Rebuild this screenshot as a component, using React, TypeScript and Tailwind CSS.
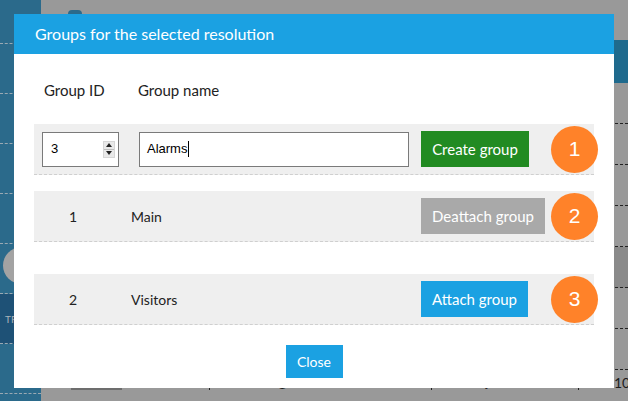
import { useState } from 'react';

const segoe = { fontFamily: 'Lato, "Open Sans", sans-serif' };

function Badge({ n }: { n: number }) {
  return (
    <div
      className="flex h-[47px] w-[47px] shrink-0 items-center justify-center rounded-full bg-[#ff8229] text-[21px] text-white"
      style={{ fontFamily: '"Liberation Sans", Arial, sans-serif' }}
    >
      {n}
    </div>
  );
}

function Spinner() {
  return (
    <div className="flex h-[17px] w-[15px] flex-col border border-[#d6d6d6] bg-[#e9e9e9]">
      <div className="flex flex-1 items-center justify-center border-b border-[#bdbdbd]">
        <div className="h-0 w-0 border-x-[3px] border-b-[4px] border-x-transparent border-b-[#222]" />
      </div>
      <div className="flex flex-1 items-center justify-center">
        <div className="h-0 w-0 border-x-[3px] border-t-[4px] border-x-transparent border-t-[#222]" />
      </div>
    </div>
  );
}

function Backdrop() {
  const leftItems = [0, 1, 2, 3, 4, 5, 6];
  const rows = [0, 1, 2, 3, 4, 5, 6];
  return (
    <div className="flex h-full w-full">
      <div className="flex w-[41px] shrink-0 flex-col bg-[#2b6a8b]">
        <div className="h-[44px] border-b border-dashed border-[#9aa9b3]" />
        {leftItems.map((i) => (
          <div
            key={i}
            className={`relative h-[50px] border-b border-dashed border-[#9aa9b3] ${i === 5 ? 'bg-[#1e5176]' : ''}`}
          >
            {i === 4 && (
              <div className="absolute left-[3px] top-[3px] h-[37px] w-[37px] rounded-full bg-[#a3a3a3]" />
            )}
            {i === 5 && (
              <span className="absolute left-[5px] top-[18px] text-[10px] text-[#a9b3ba]" style={segoe}>
                TR
              </span>
            )}
          </div>
        ))}
      </div>
      <div className="flex flex-1 flex-col bg-[#999999]">
        <div className="h-[40px]">
          <div className="ml-[27px] mt-[10px] h-[4px] w-[14px] rounded-t-full bg-[#2b6a8b]" />
        </div>
        <div className="h-[43px] bg-[#1f6a8d]" />
        {rows.map((i) => (
          <div
            key={i}
            className={`h-[41px] border-b border-dashed border-[#222] ${i === 4 ? 'bg-[#8a8a8a]' : ''}`}
          />
        ))}
        <div className="relative flex h-[30px] text-[13px] text-[#1c1c1c]" style={segoe}>
          <span className="ml-[30px] mt-[3px]">Kuails-iPhone-3</span>
          <span className="absolute left-[168px] top-[10px] h-[10px] border-l border-dashed border-[#222]" />
          <span className="absolute left-[179px] top-[3px]">team.user@infarmmobile.ru</span>
          <span className="absolute left-[390px] top-[10px] h-[10px] border-l border-dashed border-[#222]" />
          <span className="absolute left-[400px] top-[3px]">Our Project</span>
          <span className="absolute left-[537px] top-[10px] h-[10px] border-l border-dashed border-[#222]" />
          <span className="absolute left-[573px] top-[2px] text-[14px]">10/</span>
          <span className="absolute left-[30px] top-[12px] h-[8px] w-[51px] bg-[#6d6d6d]" />
        </div>
      </div>
    </div>
  );
}

export default function App() {
  const [groupId, setGroupId] = useState('3');
  const [groupName, setGroupName] = useState('Alarms');

  return (
    <div className="relative h-[401px] w-[628px] overflow-hidden">
      <Backdrop />

      <div className="absolute left-[14px] top-[14px] flex h-[374px] w-[600px] flex-col bg-white" style={segoe}>
        <div className="flex h-[40px] shrink-0 items-center bg-[#1ba1e2] px-[21px] text-[16px] text-white">
          Groups for the selected resolution
        </div>

        <div className="flex flex-col px-[20px]">
          <div className="mt-[26px] flex h-[20px] items-center text-[15px] text-[#222]">
            <span className="ml-[10px] w-[94px]">Group ID</span>
            <span>Group name</span>
          </div>

          <div className="mt-[24px] flex h-[51px] w-[560px] items-center border-b border-dashed border-[#cfcfcf] bg-[#efefef]">
            <div className="w-[97px] shrink-0 pl-[8px]">
              <div className="flex h-[35px] w-[77px] items-center border border-[#7a7a7a] bg-white pl-[8px] pr-[3px]">
                <input
                  value={groupId}
                  onChange={(e) => setGroupId(e.target.value)}
                  className="w-full min-w-0 bg-transparent text-[13px] text-black outline-none"
                  style={{ fontFamily: '"Liberation Sans", Arial, sans-serif' }}
                />
                <Spinner />
              </div>
            </div>
            <div className="w-[290px] shrink-0 pl-[8px]">
              <div className="flex h-[35px] w-[270px] items-center border border-[#7a7a7a] bg-white px-[7px]">
                <span
                  className="text-[13px] text-black"
                  style={{ fontFamily: '"Liberation Sans", Arial, sans-serif' }}
                >
                  {groupName}
                </span>
                <span className="ml-[1px] h-[16px] w-px bg-black" />
                <input
                  value=""
                  onChange={(e) => setGroupName(groupName + e.target.value)}
                  className="sr-only"
                />
              </div>
            </div>
            <div className="w-[130px] shrink-0">
              <button
                type="button"
                className="h-[36px] w-[108px] bg-[#228b22] text-[15px] text-white"
              >
                Create group
              </button>
            </div>
            <Badge n={1} />
          </div>

          <div className="mt-[16px] flex h-[51px] w-[560px] items-center border-b border-dashed border-[#cfcfcf] bg-[#efefef] text-[14px] text-[#222]">
            <div className="w-[97px] shrink-0 pl-[35px]">1</div>
            <div className="w-[290px] shrink-0">Main</div>
            <div className="w-[130px] shrink-0">
              <button
                type="button"
                className="h-[36px] w-[124px] bg-[#a9a9a9] text-[15px] text-white"
              >
                Deattach group
              </button>
            </div>
            <Badge n={2} />
          </div>

          <div className="mt-[32px] flex h-[51px] w-[560px] items-center border-b border-dashed border-[#cfcfcf] bg-[#efefef] text-[14px] text-[#222]">
            <div className="w-[97px] shrink-0 pl-[35px]">2</div>
            <div className="w-[290px] shrink-0">Visitors</div>
            <div className="w-[130px] shrink-0">
              <button
                type="button"
                className="h-[36px] w-[107px] bg-[#1ba1e2] text-[15px] text-white"
              >
                Attach group
              </button>
            </div>
            <Badge n={3} />
          </div>

          <div className="mt-[20px] flex justify-center">
            <button type="button" className="h-[33px] w-[57px] bg-[#1ba1e2] text-[14px] text-white">
              Close
            </button>
          </div>
        </div>
      </div>
    </div>
  );
}
